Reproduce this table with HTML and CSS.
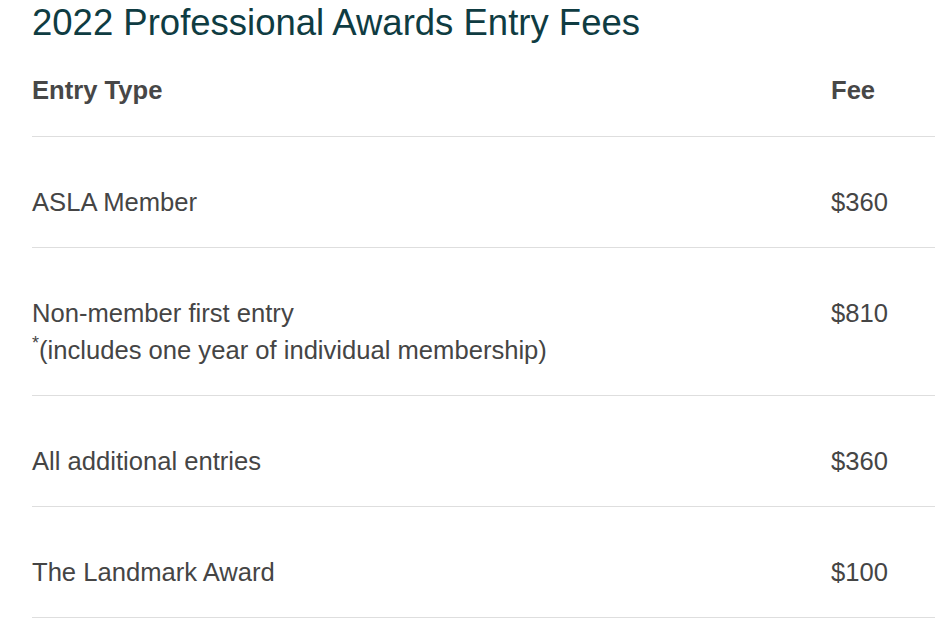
FILE: index.html
```html
<!DOCTYPE html>
<html>
<head>
<meta charset="utf-8">
<link rel="stylesheet" href="styles.css">
</head>
<body>
<main class="page">
  <h1 class="title">2022 Professional Awards Entry Fees</h1>
  <div class="fees">
    <div class="cell head">Entry Type</div>
    <div class="cell head fee">Fee</div>

    <div class="cell">ASLA Member</div>
    <div class="cell fee">$360</div>

    <div class="cell">Non-member first entry<br><sup class="ast">*</sup>(includes one year of individual membership)</div>
    <div class="cell fee">$810</div>

    <div class="cell">All additional entries</div>
    <div class="cell fee">$360</div>

    <div class="cell">The Landmark Award</div>
    <div class="cell fee">$100</div>
  </div>
</main>
</body>
</html>
```
FILE: styles.css
```css
html, body {
  margin: 0;
  padding: 0;
  background: #ffffff;
}
body {
  font-family: "Liberation Sans", Arial, sans-serif;
  overflow: hidden;
}
.page {
  padding-left: 32px;
}
.title {
  margin: 0;
  padding-top: 2px;
  font-size: 36.5px;
  line-height: 41px;
  font-weight: normal;
  color: #0f3c42;
}
.fees {
  display: grid;
  grid-template-columns: 1fr 104px;
}
.cell {
  font-size: 25.6px;
  line-height: 37px;
  color: #454545;
  padding: 47px 0 26px 0;
  border-bottom: 1px solid #dedede;
}
.cell.head {
  font-weight: bold;
  color: #474747;
  padding: 29px 0 27px 0;
}
.ast {
  font-size: 18px;
  line-height: 0;
  vertical-align: 10px;
}
```
